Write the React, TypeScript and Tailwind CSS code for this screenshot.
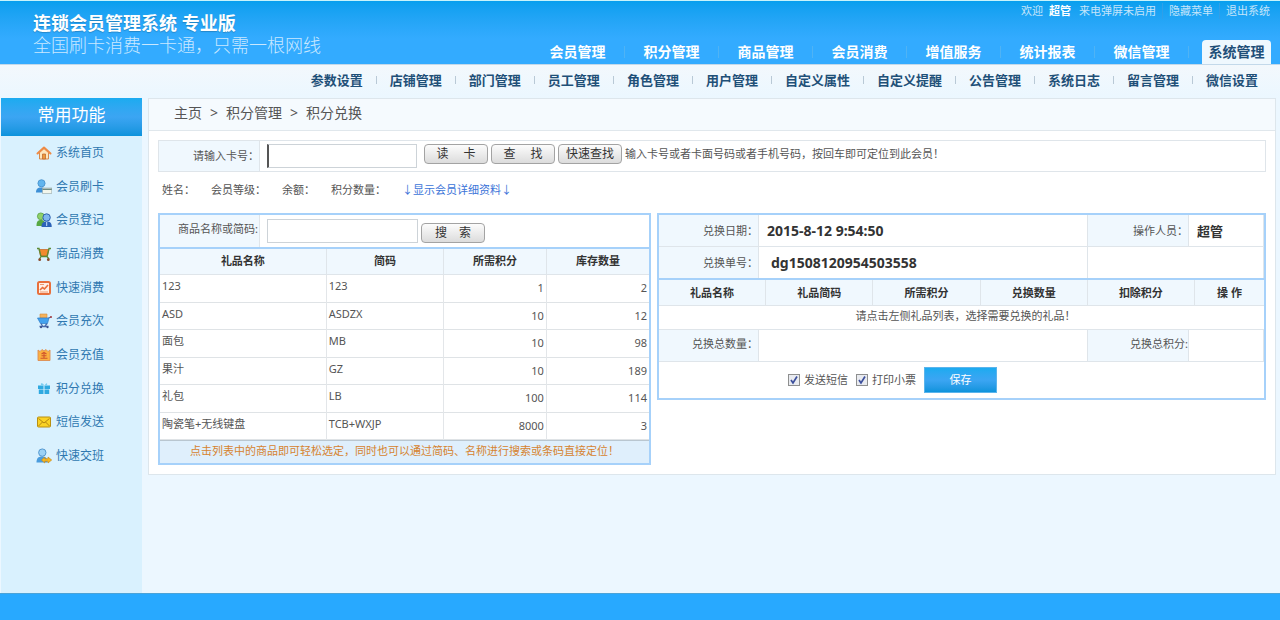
import React from 'react';
import clsx from 'clsx';

const mainNav = ['会员管理', '积分管理', '商品管理', '会员消费', '增值服务', '统计报表', '微信管理', '系统管理'];

const subNav = [
  '参数设置', '店铺管理', '部门管理', '员工管理', '角色管理', '用户管理',
  '自定义属性', '自定义提醒', '公告管理', '系统日志', '留言管理', '微信设置',
];

interface Gift {
  name: string;
  code: string;
  points: number;
  stock: number;
}

const gifts: Gift[] = [
  { name: '123', code: '123', points: 1, stock: 2 },
  { name: 'ASD', code: 'ASDZX', points: 10, stock: 12 },
  { name: '面包', code: 'MB', points: 10, stock: 98 },
  { name: '果汁', code: 'GZ', points: 10, stock: 189 },
  { name: '礼包', code: 'LB', points: 100, stock: 114 },
  { name: '陶瓷笔+无线键盘', code: 'TCB+WXJP', points: 8000, stock: 3 },
];

const Icon: React.FC<{ children: React.ReactNode }> = ({ children }) => (
  <svg viewBox="0 0 16 16" className="w-4 h-4 shrink-0" aria-hidden="true">{children}</svg>
);

const HomeIcon = () => (
  <Icon>
    <path d="M3.5 7.5V14h9V7.5L8 3.5z" fill="#fde6bd" stroke="#d98a4b" />
    <path d="M1.500 8.500 8 2.500l6.500 6" fill="none" stroke="#ee8a45" strokeWidth="2" strokeLinejoin="round" strokeLinecap="round" />
    <path d="M6.500 9h3v5h-3z" fill="#ef9a3d" stroke="#b9622a" strokeWidth=".7" />
  </Icon>
);

const CardUserIcon = () => (
  <Icon>
    <path d="M0 13.500c0-3.500 1.500-5 5-5s5 1.500 5 5z" fill="#3d8fd6" />
    <circle cx="5.500" cy="4.300" r="3.600" fill="#62b5ee" stroke="#3c86c4" strokeWidth=".7" />
    <rect x="6.500" y="9" width="9.300" height="5.500" fill="#f2f6ec" stroke="#94a7a8" strokeWidth=".6" />
    <path d="M6.500 10.300h9.300" stroke="#6f8a80" strokeWidth="1.400" />
  </Icon>
);

const UsersIcon = () => (
  <Icon>
    <path d="M.5 14c0-4 1-6 4.500-6s4 2 4 6z" fill="#58a944" />
    <circle cx="4.800" cy="4.300" r="3.400" fill="#8fd06a" stroke="#4f9a3a" strokeWidth=".7" />
    <path d="M5.500 15c0-4 1.500-5.500 5.200-5.500s5 1.500 5 5.500z" fill="#2c63b8" />
    <circle cx="10.600" cy="5.500" r="3.700" fill="#7fb6ee" stroke="#2759a8" strokeWidth=".9" />
    <path d="M10.700 10v4" stroke="#c9e2fa" />
  </Icon>
);

const CartIcon = () => (
  <Icon>
    <path d="M3 3.500h10L11.500 10h-7z" fill="#f28a2e" stroke="#c46320" strokeWidth=".7" />
    <path d="M1 2.500h2l2 8M15 2.500h-2l-2 8 2 2.500M5 10.500 3.500 13M5 10.500h6" fill="none" stroke="#5c8a35" strokeWidth="1.300" />
    <circle cx="3.700" cy="13.700" r="1.400" fill="#8a4a2b" />
    <circle cx="12.300" cy="13.700" r="1.400" fill="#8a4a2b" />
  </Icon>
);

const ChartIcon = () => (
  <Icon>
    <rect x="2" y="2" width="12" height="12" rx="1.500" fill="#fff1e6" stroke="#e8703c" strokeWidth="2" />
    <path d="M4 10 6.500 7.500l2 1.500L12 5" fill="none" stroke="#e8703c" strokeWidth="1.600" />
    <path d="M4 12h8M4 4.500h4" stroke="#ef9a72" />
  </Icon>
);

const BlueCartIcon = () => (
  <Icon>
    <path d="M4 1h7v4H4z" fill="#f6b25a" stroke="#d28f42" strokeWidth=".6" />
    <path d="M1.500 5H13l-1.500 5.500h-7z" fill="#44a2ee" stroke="#2b7cc9" strokeWidth=".7" />
    <path d="M12.500 5 15 4M5 10.500l1.500 2.500M11 10.500l-2 2.500M3.500 13.500h9" fill="none" stroke="#4a6bab" strokeWidth="1.300" />
    <circle cx="15" cy="4" r="1" fill="#a83a3a" />
    <circle cx="5" cy="14.300" r="1" fill="#3a4c86" />
    <circle cx="11.500" cy="14.300" r="1" fill="#3a4c86" />
  </Icon>
);

const MoneyIcon = () => (
  <Icon>
    <path d="M2 3 4 4.500l2-2L8 4l2-1.500 2 2L14 3v10.500H2z" fill="#fbb040" stroke="#dd8d52" strokeWidth=".9" />
    <path d="M5.500 7 8 5.500 10.500 7M8 6v5M5.500 8.800h5M4.500 11.300h7" fill="none" stroke="#d0542c" strokeWidth="1.100" />
  </Icon>
);

const GiftIcon = () => (
  <Icon>
    <path d="M2 4.500h5.500v3.500H2zM8.500 4.500H14V8H8.500zM2.800 8.600h4.700v4.400H2.800zM8.500 8.600h4.700V13H8.500z" fill="#2fa9e0" />
    <path d="M8 4.500C5.500 4.500 4 3.500 5 2.500S8 3 8 4.500s2-3 3-2-.5 2-3 2z" fill="#7acdf0" />
  </Icon>
);

const MailIcon = () => (
  <Icon>
    <rect x="1.500" y="3" width="13" height="10" rx="1" fill="#fbd326" stroke="#b88f12" />
    <path d="m2.500 4.500 5.500 4.500 5.500-4.500M2.500 12l4-4M13.500 12l-4-4" fill="none" stroke="#a97e10" strokeWidth=".9" />
  </Icon>
);

const ShiftIcon = () => (
  <Icon>
    <path d="M.5 14.500c0-4 1.500-6 5.500-6s5.500 2 5.500 6z" fill="#4a9cdd" />
    <circle cx="6.300" cy="4.600" r="3.700" fill="#9cd2f6" stroke="#3f88c5" strokeWidth=".8" />
    <path d="m5.500 12 3.200-3v1.800H12V9l3.700 3-3.700 3v-1.800H8.700V15z" fill="#f9b81f" stroke="#c28312" strokeWidth=".6" />
  </Icon>
);

const shortcuts = [
  { label: '系统首页', icon: <HomeIcon /> },
  { label: '会员刷卡', icon: <CardUserIcon /> },
  { label: '会员登记', icon: <UsersIcon /> },
  { label: '商品消费', icon: <CartIcon /> },
  { label: '快速消费', icon: <ChartIcon /> },
  { label: '会员充次', icon: <BlueCartIcon /> },
  { label: '会员充值', icon: <MoneyIcon /> },
  { label: '积分兑换', icon: <GiftIcon /> },
  { label: '短信发送', icon: <MailIcon /> },
  { label: '快速交班', icon: <ShiftIcon /> },
];

const GrayButton: React.FC<{ children: React.ReactNode }> = ({ children }) => (
  <button
    type="button"
    className="w-16 h-5 shrink-0 whitespace-pre rounded border border-[#a3a3a3] bg-linear-to-b from-[#fcfcfc] to-[#dcdcdc] text-xs leading-4 text-[#333]"
  >
    {children}
  </button>
);

const CheckOption: React.FC<{ id: string; label: string }> = ({ id, label }) => (
  <div className="flex items-center gap-1">
    <span className="grid w-3 h-3">
      <input
        id={id}
        type="checkbox"
        defaultChecked
        className="peer [grid-area:1/1] w-3 h-3 appearance-none border border-[#8e8f8f] bg-[#e9ebf0]"
      />
      <svg viewBox="0 0 12 12" className="[grid-area:1/1] w-3 h-3 pointer-events-none invisible peer-checked:visible">
        <path d="m3 6 2 3 4-6.500" fill="none" stroke="#3c4f9c" strokeWidth="1.700" />
      </svg>
    </span>
    <label htmlFor={id}>{label}</label>
  </div>
);

const Header = () => (
  <header className="flex h-16 justify-between border-t border-[#c8f3fb] bg-linear-to-b from-[#079fee] to-[#33abff] to-60% text-white">
    <div className="pt-[10px] pl-[33px]">
      <h1 className="text-[18px] leading-6 font-bold text-shadow-xs">连锁会员管理系统 专业版</h1>
      <p className="text-[18px] leading-5 font-light text-[#c9e8ff]">全国刷卡消费一卡通，只需一根网线</p>
    </div>
    <div className="flex flex-col items-end justify-between">
      <div className="flex items-center pt-[2px] pr-[10px] leading-4 text-[#c5e5fa]">
        <span>欢迎</span>
        <strong className="ml-[6px] mr-2 text-white">超管</strong>
        <a href="#" className="pr-[6px]">来电弹屏未启用</a>
        <a href="#" className="border-l border-[#2f9fe8] px-[6px]">隐藏菜单</a>
        <a href="#" className="border-l border-[#2f9fe8] pl-[6px]">退出系统</a>
      </div>
      <nav className="flex items-end pr-[9px] text-[14px] font-bold">
        {mainNav.map((item) => {
          const active = item === '系统管理';
          return (
            <a
              key={item}
              href="#"
              className={clsx(
                'text-center',
                active ? 'ml-[13px] h-6 w-[69px] rounded-t bg-[#eff8fe] leading-6 text-[#1f4f78]' : 'mb-[6px] h-3 w-[94px] border-r border-[#4fb3f5] leading-3',
              )}
            >
              {item}
            </a>
          );
        })}
      </nav>
    </div>
  </header>
);

const SubNav = () => (
  <nav className="flex h-[34px] items-center justify-end border-t border-[#c3d9ea] bg-linear-to-b from-[#f3f8fc] to-[#ebf7ff] pr-[9px] pb-1 text-[13px] font-bold text-[#1f5078]">
    {subNav.map((item, i) => (
      <a key={item} href="#" className={clsx('px-[13px] leading-2', i > 0 && 'border-l border-[#b9c9d6]')}>
        {item}
      </a>
    ))}
  </nav>
);

const Sidebar = () => (
  <aside className="w-[141px] shrink-0 bg-[#d9f1fe]">
    <h2 className="h-[38px] bg-linear-to-b from-[#1aabf0] via-[#3ba5f3] to-[#0a93dc] text-center text-[17px] leading-[34px] text-white">常用功能</h2>
    <ul className="grid h-[337px] grid-rows-10 text-xs text-[#2f78b0]">
      {shortcuts.map((s) => (
        <li key={s.label} className="flex items-center pl-[35px]">
          <a href="#" className="flex items-center gap-1">{s.icon}{s.label}</a>
        </li>
      ))}
    </ul>
  </aside>
);

const GiftPanel = () => (
  <section className="border-2 border-[#a6d1fa]">
    <div className="flex h-8 items-stretch">
      <label htmlFor="gift-key" className="w-[100px] border-r border-[#dfe5ea] bg-[#f0f8fe] pr-px text-right leading-7">商品名称或简码:</label>
      <div className="flex items-center pl-[7px]">
        <input id="gift-key" className="h-6 w-[151px] border border-[#cdd3d8] bg-white px-1 outline-none" />
        <div className="ml-[3px] pt-[3px] flex"><GrayButton>搜　索</GrayButton></div>
      </div>
    </div>
    <table className="w-full table-fixed border-collapse border-t-2 border-[#a6d1fa]">
      <thead>
        <tr className="h-[26px] bg-[#f0f8fe] text-[#333]">
          <th className="w-[34%] border-r border-b border-[#dfe5ea]">礼品名称</th>
          <th className="w-[24%] border-r border-b border-[#dfe5ea]">简码</th>
          <th className="w-[21%] border-r border-b border-[#dfe5ea]">所需积分</th>
          <th className="border-b border-[#dfe5ea]">库存数量</th>
        </tr>
      </thead>
      <tbody>
        {gifts.map((g) => (
          <tr key={g.name} className="h-7 even:h-[27px] border-b border-[#dfe3e6]">
            <td className="border-r border-[#e3e6e9] pb-1 pl-[2px]">{g.name}</td>
            <td className="border-r border-[#e3e6e9] pb-1 pl-[2px]">{g.code}</td>
            <td className="border-r border-[#e3e6e9] pr-[2px] text-right">{g.points}</td>
            <td className="pr-[2px] text-right">{g.stock}</td>
          </tr>
        ))}
      </tbody>
    </table>
    <p className="h-[23px] border-t border-[#b9c6d0] bg-[#dfeffc] text-center leading-5 text-[#d6832f]">
      点击列表中的商品即可轻松选定，同时也可以通过简码、名称进行搜索或条码直接定位！
    </p>
  </section>
);

const labelCell = 'border-r border-b border-[#dfe5ea] bg-[#f0f8fe] text-right';
const valueCell = 'border-r border-b border-[#dfe5ea] px-2 text-left text-[#333]';

const ExchangePanel = () => (
  <section className="self-start border-2 border-[#a6d1fa]">
    <table className="w-full table-fixed border-separate border-spacing-0">
      <tbody>
        <tr className="h-8">
          <th className={clsx(labelCell, 'w-[100px] font-normal')}>兑换日期：</th>
          <td className={clsx(valueCell, 'text-[14px] font-bold')}>2015-8-12 9:54:50</td>
          <th className={clsx(labelCell, 'w-[101px] font-normal')}>操作人员：</th>
          <td className={clsx(valueCell, 'w-[75px] text-[13px] font-bold')}>超管</td>
        </tr>
        <tr className="h-[31px]">
          <th className={clsx(labelCell, 'border-b-0 font-normal')}>兑换单号：</th>
          <td className={clsx(valueCell, 'border-b-0 pl-3 text-[14px] font-bold')}>dg1508120954503558</td>
          <td className={clsx(valueCell, 'border-b-0')} colSpan={2}></td>
        </tr>
      </tbody>
    </table>
    <table className="w-full table-fixed border-separate border-spacing-0 border-t-2 border-[#a6d1fa]">
      <thead>
        <tr className="h-[26px] bg-[#f0f8fe] text-[#333]">
          {['礼品名称', '礼品简码', '所需积分', '兑换数量', '扣除积分'].map((h) => (
            <th key={h} className="border-r border-b border-[#dfe5ea]">{h}</th>
          ))}
          <th className="w-[69px] border-b border-[#dfe5ea]">操 作</th>
        </tr>
      </thead>
      <tbody>
        <tr className="h-6">
          <td colSpan={6} className="border-b border-[#dfe5ea] pb-1 pl-2 text-center">请点击左侧礼品列表，选择需要兑换的礼品！</td>
        </tr>
      </tbody>
    </table>
    <table className="w-full table-fixed border-separate border-spacing-0">
      <tbody>
        <tr className="h-8">
          <th className={clsx(labelCell, 'w-[100px] pb-1 font-normal')}>兑换总数量：</th>
          <td className={valueCell}></td>
          <th className={clsx(labelCell, 'w-[101px] pb-1 font-normal')}>兑换总积分:</th>
          <td className={clsx(valueCell, 'w-[75px]')}></td>
        </tr>
      </tbody>
    </table>
    <div className="flex h-9 items-center pl-[129px]">
      <div className="flex gap-2 pr-2">
        <CheckOption id="send-sms" label="发送短信" />
        <CheckOption id="print-ticket" label="打印小票" />
      </div>
      <button type="button" className="h-[26px] w-[73px] border border-[#5ab4ec] bg-linear-to-b from-[#1aabf0] via-[#3ba5f3] to-[#0a93dc] text-white">保存</button>
    </div>
  </section>
);

const App: React.FC = () => (
  <div className="flex min-h-screen flex-col bg-[#ecf7ff] font-['Noto_Sans','Noto_Sans_CJK_SC',sans-serif] text-[11px] leading-4 text-[#555]">
    <Header />
    <SubNav />
    <div className="flex flex-1 items-stretch gap-[6px] pr-1 pl-px">
      <Sidebar />
      <main className="min-w-0 flex-1 self-start border border-[#dde6ec] bg-white">
        <div className="flex h-8 items-center gap-2 border-b border-[#e0e7ec] bg-[#f5fafe] pb-1 pl-[25px] text-[14px]">
          <a href="#">主页</a>
          <span>&gt;</span>
          <a href="#">积分管理</a>
          <span>&gt;</span>
          <span>积分兑换</span>
        </div>
        <div className="pt-[9px] pr-[9px] pb-[9px] pl-[9px]">
          <div className="flex h-8 items-stretch border border-[#dfe5ea]">
            <label htmlFor="card-no" className="w-[101px] shrink-0 border-r border-[#dfe5ea] bg-[#f0f8fe] text-right leading-[30px]">请输入卡号：</label>
            <div className="flex items-center pl-[7px]">
              <input id="card-no" className="h-6 w-[150px] border border-l-2 border-[#cdd3d8] border-l-[#555] bg-white px-1 outline-none" />
              <div className="flex gap-[3px] pb-1 pl-[7px]">
                <GrayButton>读　 卡</GrayButton>
                <GrayButton>查　 找</GrayButton>
                <GrayButton>快速查找</GrayButton>
              </div>
              <span className="pb-1 pl-[3px]">输入卡号或者卡面号码或者手机号码，按回车即可定位到此会员！</span>
            </div>
          </div>
          <div className="flex h-[41px] items-center gap-4 pb-[6px] pl-1">
            <span>姓名：</span>
            <span>会员等级：</span>
            <span>余额：</span>
            <span>积分数量：</span>
            <a href="#" className="text-[#3b74d8]">↓显示会员详细资料↓</a>
          </div>
          <div className="grid grid-cols-[493fr_609fr] items-start gap-[6px]">
            <GiftPanel />
            <ExchangePanel />
          </div>
        </div>
      </main>
    </div>
    <footer className="h-[27px] border-t border-[#4ba3d8] bg-[#28a9ff]" />
  </div>
);

export default App;
